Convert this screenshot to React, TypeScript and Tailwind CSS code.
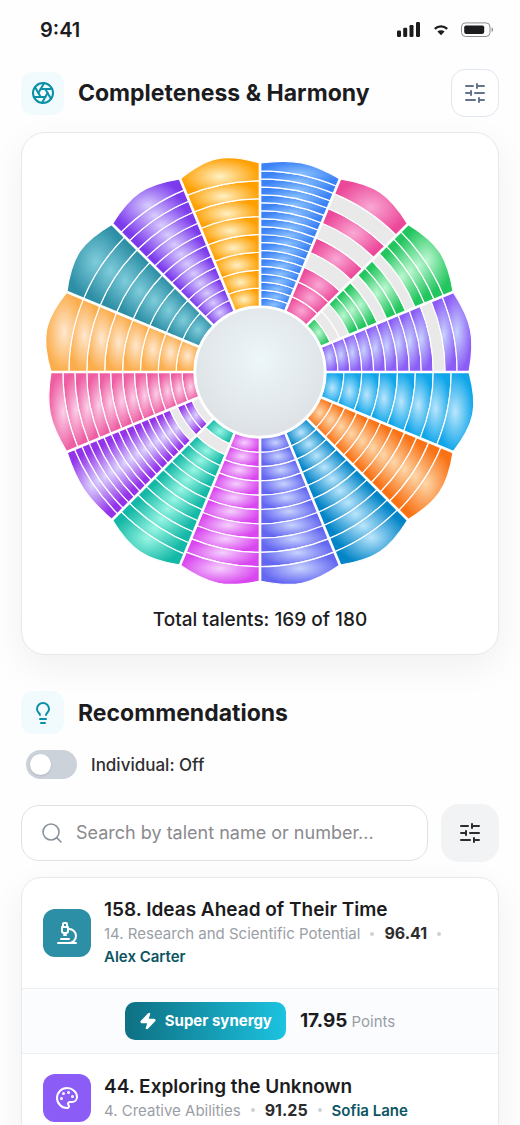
import { useState } from "react";
import {
  Aperture,
  Lightbulb,
  Microscope,
  Palette,
  Search,
  SlidersHorizontal,
  Zap,
  type LucideIcon,
} from "lucide-react";

type Petal = {
  name: string;
  light: string;
  dark: string;
  rings: number;
  missing: number[];
  bulge: number;
};

// Clockwise from twelve o'clock. `missing` holds ring numbers counted from the hub.
const PETALS: Petal[] = [
  { name: "blue", light: "#8cc2ff", dark: "#3b82f6", rings: 18, missing: [], bulge: 216 },
  { name: "pink", light: "#f9a8d4", dark: "#ec4899", rings: 9, missing: [4, 6, 8], bulge: 220 },
  { name: "green", light: "#bbf7d0", dark: "#22c55e", rings: 14, missing: [2, 3, 7, 10], bulge: 220 },
  { name: "purple", light: "#c7d2fe", dark: "#8b5cf6", rings: 12, missing: [10], bulge: 218 },
  { name: "cyan", light: "#bae6fd", dark: "#0ea5e9", rings: 8, missing: [], bulge: 221 },
  { name: "orange", light: "#fed7aa", dark: "#f97316", rings: 11, missing: [], bulge: 220 },
  { name: "ocean", light: "#bae6fd", dark: "#0284c7", rings: 10, missing: [], bulge: 220 },
  { name: "indigo", light: "#c7d2fe", dark: "#6366f1", rings: 10, missing: [], bulge: 219 },
  { name: "magenta", light: "#f5d0fe", dark: "#d946ef", rings: 10, missing: [], bulge: 219 },
  { name: "mint", light: "#99f6e4", dark: "#14b8a6", rings: 12, missing: [2], bulge: 220 },
  { name: "violet", light: "#ddd6fe", dark: "#9333ea", rings: 18, missing: [1, 4], bulge: 214 },
  { name: "rose", light: "#fbcfe8", dark: "#ee5da2", rings: 12, missing: [], bulge: 217 },
  { name: "peach", light: "#ffe8cf", dark: "#fbad4c", rings: 8, missing: [], bulge: 222 },
  { name: "teal", light: "#7fcddb", dark: "#2d8fa6", rings: 8, missing: [], bulge: 221 },
  { name: "iris", light: "#d8ccff", dark: "#7c3aed", rings: 12, missing: [], bulge: 220 },
  { name: "amber", light: "#fff0c4", dark: "#ff9f00", rings: 8, missing: [], bulge: 222 },
];

const HUB_RADIUS = 66;
const RIM_RADIUS = 209;
const STEP = 360 / PETALS.length;

const TOTAL = PETALS.reduce((sum, petal) => sum + petal.rings, 0);
const OWNED = PETALS.reduce(
  (sum, petal) => sum + petal.rings - petal.missing.length,
  0,
);

function point(radius: number, angle: number) {
  const rad = ((angle - 90) * Math.PI) / 180;
  return `${(radius * Math.cos(rad)).toFixed(2)} ${(radius * Math.sin(rad)).toFixed(2)}`;
}

function ringPath(petal: Petal, index: number, ring: number) {
  const thickness = (RIM_RADIUS - HUB_RADIUS) / petal.rings;
  const inner = HUB_RADIUS + thickness * (ring - 1);
  const outer = inner + thickness;
  const start = index * STEP;
  const end = start + STEP;
  const outerEdge =
    ring === petal.rings
      ? `C ${point(petal.bulge, start + STEP * 0.4)} ${point(petal.bulge, start + STEP * 0.6)} ${point(outer, end)}`
      : `A ${outer} ${outer} 0 0 1 ${point(outer, end)}`;

  return `M ${point(inner, start)} L ${point(outer, start)} ${outerEdge} L ${point(inner, end)} A ${inner} ${inner} 0 0 0 ${point(inner, start)} Z`;
}

function TalentWheel() {
  return (
    <svg
      viewBox="-218 -218 436 436"
      className="w-full max-w-[436px]"
      role="img"
      aria-label="Talent wheel"
    >
      <defs>
        {PETALS.map((petal) => (
          <radialGradient key={petal.name} id={`petal-${petal.name}`} r="0.5">
            <stop offset="0%" stopColor={petal.light} />
            <stop offset="100%" stopColor={petal.dark} />
          </radialGradient>
        ))}
        <radialGradient id="hub" cx="0.5" cy="0.4" r="0.6">
          <stop offset="0%" stopColor="#edf6f9" />
          <stop offset="100%" stopColor="#dde1e5" />
        </radialGradient>
      </defs>

      {PETALS.map((petal, index) =>
        Array.from({ length: petal.rings }, (_, i) => i + 1).map((ring) => (
          <path
            key={`${petal.name}-${ring}`}
            d={ringPath(petal, index, ring)}
            fill={
              petal.missing.includes(ring)
                ? "#e9e9e9"
                : `url(#petal-${petal.name})`
            }
            stroke="#fff"
            strokeWidth="1.2"
          />
        )),
      )}

      {PETALS.map((petal, index) => (
        <path
          key={petal.name}
          d={`M ${point(HUB_RADIUS, index * STEP)} L ${point(RIM_RADIUS + 2, index * STEP)}`}
          stroke="#fff"
          strokeWidth="2.7"
        />
      ))}

      <circle r="65" fill="url(#hub)" stroke="#fff" strokeWidth="2.6" />
    </svg>
  );
}

function StatusBar() {
  return (
    <div className="flex h-15 items-center justify-between pr-[26px] pl-10">
      <span className="text-xl font-semibold">9:41</span>
      <div className="flex items-center gap-[13px]">
        <svg viewBox="0 0 24 16" className="h-4 w-6" fill="#1c1c1e">
          <rect x="0" y="8.4" width="4" height="6.6" rx="1.2" />
          <rect x="6.2" y="5.7" width="4" height="9.3" rx="1.2" />
          <rect x="12.5" y="3" width="4" height="12" rx="1.2" />
          <rect x="19" y="0" width="4" height="15" rx="1.2" />
        </svg>
        <svg viewBox="0 0 14 12" className="h-3 w-3.5" fill="none">
          <path d="M0.8 4.9a9 9 0 0 1 12.4 0" stroke="#1c1c1e" strokeWidth="2.2" />
          <path d="M3.4 7.6a5.2 5.2 0 0 1 7.2 0L7 11.2Z" fill="#1c1c1e" />
        </svg>
        <svg viewBox="0 0 33 16" className="h-4 w-[33px]" fill="none">
          <rect x="0.5" y="0.9" width="28.5" height="13.6" rx="4" stroke="#8e8e93" />
          <rect x="3.2" y="3.5" width="20" height="8.4" rx="1.8" fill="#1c1c1e" />
          <path d="M30.6 5.5v4.4c1-.3 1.5-1.2 1.5-2.2s-.5-1.9-1.5-2.2Z" fill="#8e8e93" />
        </svg>
      </div>
    </div>
  );
}

function SectionHeading({ icon: Icon, title }: { icon: LucideIcon; title: string }) {
  return (
    <div className="flex items-center gap-3.5">
      <div className="flex h-[43px] w-[43px] shrink-0 items-center justify-center rounded-xl bg-[#f1fbfd] text-[#0c8fa8]">
        <Icon className="h-6 w-6" />
      </div>
      <h2 className="text-[23px] leading-7 font-bold">{title}</h2>
    </div>
  );
}

type Talent = {
  title: string;
  category: string;
  score: string;
  person: string;
  icon: LucideIcon;
  iconBg: string;
};

function TalentRow({ talent }: { talent: Talent }) {
  const Icon = talent.icon;

  return (
    <div className="flex items-center gap-[13px] px-[21px] py-5">
      <div
        className={`flex h-12 w-12 shrink-0 items-center justify-center rounded-xl text-white ${talent.iconBg}`}
      >
        <Icon className="h-6 w-6" />
      </div>
      <div className="min-w-0">
        <h3 className="text-[19px] leading-6 font-semibold">{talent.title}</h3>
        <p className="flex flex-wrap items-center gap-x-2.5 text-[15px] leading-[23px] text-[#9a9ea6]">
          <span>{talent.category}</span>
          <span className="h-1 w-1 rounded-full bg-[#cdd1d7]" />
          <span className="text-base leading-[23px] font-bold text-[#2c2c2e]">
            {talent.score}
          </span>
          <span className="h-1 w-1 rounded-full bg-[#cdd1d7]" />
          <span className="font-semibold text-[#0b5563]">{talent.person}</span>
        </p>
      </div>
    </div>
  );
}

const PAIR: [Talent, Talent] = [
  {
    title: "158. Ideas Ahead of Their Time",
    category: "14. Research and Scientific Potential",
    score: "96.41",
    person: "Alex Carter",
    icon: Microscope,
    iconBg: "bg-[#2d8fa6]",
  },
  {
    title: "44. Exploring the Unknown",
    category: "4. Creative Abilities",
    score: "91.25",
    person: "Sofia Lane",
    icon: Palette,
    iconBg: "bg-[#8b5cf6]",
  },
];

export default function App() {
  const [individual, setIndividual] = useState(false);

  return (
    <div className="h-screen overflow-hidden bg-[#fefefe] font-['Inter',sans-serif] text-[#1c1c1e]">
      <StatusBar />

      <main className="px-[21px] pt-[9px]">
        <div className="flex items-center justify-between">
          <SectionHeading icon={Aperture} title="Completeness & Harmony" />
          <button
            type="button"
            aria-label="Wheel settings"
            className="flex h-12 w-12 items-center justify-center rounded-[14px] border border-[#e0e6ef] bg-white text-[#64748b]"
          >
            <SlidersHorizontal className="h-6 w-6" />
          </button>
        </div>

        <section className="mt-[15px] flex flex-col items-center rounded-3xl border border-[#e8e8ea] bg-white px-5 pt-[21px] pb-[21px] shadow-[0_12px_36px_rgba(0,0,0,0.06)]">
          <TalentWheel />
          <p className="mt-[17px] text-[19px] leading-[26px] font-medium">
            Total talents: {OWNED} of {TOTAL}
          </p>
        </section>

        <section className="mt-9">
          <SectionHeading icon={Lightbulb} title="Recommendations" />

          <label className="mt-4 ml-[5px] flex w-fit items-center gap-3.5">
            <input
              type="checkbox"
              role="switch"
              checked={individual}
              onChange={(e) => setIndividual(e.target.checked)}
              className="peer sr-only"
            />
            <span className="flex h-[29px] w-[51px] items-center rounded-full bg-[#cbd2da] p-1 peer-checked:justify-end peer-checked:bg-[#0c8fa8]">
              <span className="h-[21px] w-[21px] rounded-full bg-white shadow-sm" />
            </span>
            <span className="text-[17px] leading-6 font-medium text-[#2f2f31]">
              Individual: {individual ? "On" : "Off"}
            </span>
          </label>

          <div className="mt-[25px] flex items-center gap-[13px]">
            <label className="flex h-14 min-w-0 flex-1 items-center gap-3 rounded-[18px] border border-[#e0e1e4] bg-white px-[18px]">
              <Search className="h-6 w-6 shrink-0 text-[#8b929c]" strokeWidth={1.6} />
              <input
                type="search"
                aria-label="Search talents"
                placeholder="Search by talent name or number..."
                className="min-w-0 flex-1 text-lg outline-none placeholder:text-[#8a8a8e]"
              />
            </label>
            <button
              type="button"
              aria-label="Filter recommendations"
              className="flex h-[58px] w-[58px] items-center justify-center rounded-[18px] bg-[#f2f3f5] text-[#2c2c2e]"
            >
              <SlidersHorizontal className="h-6 w-6" />
            </button>
          </div>

          <div className="mt-[15px] overflow-hidden rounded-[20px] border border-[#e8e8ea] bg-white shadow-[0_12px_36px_rgba(0,0,0,0.06)]">
            <TalentRow talent={PAIR[0]} />
            <div className="flex items-center justify-center gap-3.5 border-y border-[#edf0f3] bg-[#fafcfe] py-[13px]">
              <span className="flex h-[38px] items-center gap-2 rounded-[10px] bg-linear-to-r from-[#0e7083] to-[#1cc3e0] px-3.5 text-[15px] font-bold text-white">
                <Zap className="h-[18px] w-[18px] fill-current" />
                Super synergy
              </span>
              <p className="text-[15px] leading-6 text-[#9a9ea6]">
                <span className="text-[19px] font-bold text-[#1c1c1e]">17.95</span> Points
              </p>
            </div>
            <TalentRow talent={PAIR[1]} />
          </div>
        </section>
      </main>
    </div>
  );
}
